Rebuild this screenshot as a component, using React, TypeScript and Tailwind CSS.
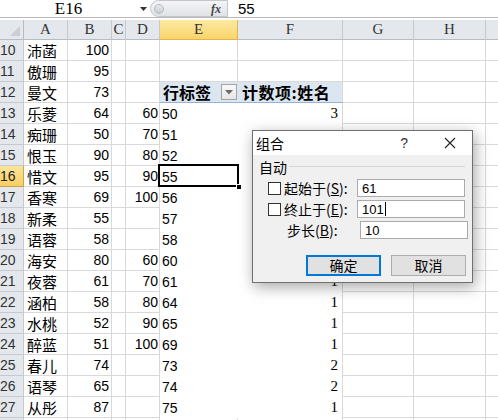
import React from "react";

const cols = ["A", "B", "C", "D", "E", "F", "G", "H", ""];
const widths = ["w-[24px]", "w-[44px]", "w-[44px]", "w-[14px]", "w-[34px]", "w-[78px]", "w-[105px]", "w-[71px]", "w-[72px]", "w-[30px]"];

type Row = { n: number; a: string; b: string; d: string; e: string; f: string };
const data: Row[] = [
  { n: 10, a: "沛菡", b: "100", d: "", e: "", f: "" },
  { n: 11, a: "傲珊", b: "95", d: "", e: "", f: "" },
  { n: 12, a: "曼文", b: "73", d: "", e: "H", f: "H" },
  { n: 13, a: "乐菱", b: "64", d: "60", e: "50", f: "3" },
  { n: 14, a: "痴珊", b: "50", d: "70", e: "51", f: "" },
  { n: 15, a: "恨玉", b: "90", d: "80", e: "52", f: "" },
  { n: 16, a: "惜文", b: "95", d: "90", e: "55", f: "" },
  { n: 17, a: "香寒", b: "69", d: "100", e: "56", f: "" },
  { n: 18, a: "新柔", b: "55", d: "", e: "57", f: "" },
  { n: 19, a: "语蓉", b: "58", d: "", e: "58", f: "" },
  { n: 20, a: "海安", b: "80", d: "60", e: "60", f: "" },
  { n: 21, a: "夜蓉", b: "61", d: "70", e: "61", f: "1" },
  { n: 22, a: "涵柏", b: "58", d: "80", e: "64", f: "1" },
  { n: 23, a: "水桃", b: "52", d: "90", e: "65", f: "1" },
  { n: 24, a: "醉蓝", b: "51", d: "100", e: "69", f: "1" },
  { n: 25, a: "春儿", b: "74", d: "", e: "73", f: "2" },
  { n: 26, a: "语琴", b: "65", d: "", e: "74", f: "2" },
  { n: 27, a: "从彤", b: "87", d: "", e: "75", f: "1" },
  { n: 28, a: "", b: "", d: "", e: "", f: "" },
];

const cjk = "font-['Noto_Sans_CJK_SC',sans-serif]";
const num = "font-['Liberation_Sans',sans-serif]";
const serif = "font-['Liberation_Serif',serif]";

function DataRow({ r }: { r: Row }) {
  const pivot = r.n >= 12 && r.n <= 27;
  const sel = r.n === 16;
  const base = "h-[21px] shrink-0 border-b border-r border-[#d9d9d9] flex items-center leading-none overflow-hidden";
  return (
    <div className="flex h-[21px]">
      <div
        className={`${widths[0]} h-[21px] shrink-0 border-b border-r flex items-center ${num} text-[14px] leading-none ${
          sel
            ? "bg-gradient-to-b from-[#fbe49a] to-[#f7cf5f] border-[#c9a550] text-[#222]"
            : "bg-[#e4e8ed] border-[#c5cad1] text-[#333]"
        }`}
      >
        {r.n < 28 && <span>{r.n}</span>}
      </div>
      <div className={`${widths[1]} ${base} ${cjk} text-[15px] pl-[3px] text-black`}>{r.a}</div>
      <div className={`${widths[2]} ${base} ${num} text-[14px] justify-end pr-[2px] text-black`}>{r.b}</div>
      <div className={`${widths[3]} ${base}`}></div>
      <div className={`${widths[4]} ${base} ${num} text-[14px] justify-end pr-[1px] text-black`}>{r.d}</div>
      {r.n === 12 ? (
        <>
          <div className={`${widths[5]} h-[21px] shrink-0 bg-[#dce6f1] border-b border-[#95b3d7] flex items-center pl-[3px] leading-none`}>
            <span className={`${cjk} font-bold text-[16px] text-black`}>行标签</span>
            <div className="ml-auto mr-[1px] w-[16px] h-[16px] border border-[#a3a3a3] bg-gradient-to-b from-[#f8f8f8] to-[#e6e6e6] flex items-center justify-center">
              <svg width="8" height="5" viewBox="0 0 8 5">
                <path d="M0 0 L8 0 L4 4.5 Z" fill="#6b6b6b" />
              </svg>
            </div>
          </div>
          <div className={`${widths[6]} h-[21px] shrink-0 bg-[#dce6f1] border-b border-r border-b-[#95b3d7] border-r-[#d9d9d9] flex items-center pl-[4px] leading-none`}>
            <span className={`${cjk} font-bold text-[16px] text-black tracking-[0.5px]`}>计数项:姓名</span>
          </div>
        </>
      ) : pivot ? (
        <>
          <div className={`${widths[5]} h-[21px] shrink-0 relative flex items-center pl-[2px] leading-none ${num} text-[14px] text-black`}>
            {r.e}
            {sel && (
              <div className="absolute left-[-2px] top-[-2px] right-[-1px] bottom-[0px] border-[2.5px] border-black">
                <div className="absolute right-[-5px] bottom-[-5px] w-[6px] h-[6px] bg-black border border-white"></div>
              </div>
            )}
          </div>
          <div className={`${widths[6]} h-[21px] shrink-0 border-r border-[#d9d9d9] flex items-center justify-end pr-[4px] leading-none ${serif} text-[15px] text-black`}>
            {r.f}
          </div>
        </>
      ) : (
        <>
          <div className={`${widths[5]} ${base}`}></div>
          <div className={`${widths[6]} ${base}`}></div>
        </>
      )}
      <div className={`${widths[7]} ${base}`}></div>
      <div className={`${widths[8]} ${base}`}></div>
      <div className={`${widths[9]} ${base}`}></div>
    </div>
  );
}

function Check() {
  return <div className="w-[13px] h-[13px] border border-[#333] bg-white shrink-0"></div>;
}

function Field({ value, cursor }: { value: string; cursor?: boolean }) {
  return (
    <div className={`w-[108px] h-[18px] border border-[#aaaaaa] bg-white flex items-center pl-[4px] leading-none ${num} text-[13px] text-black`}>
      {value}
      {cursor && <span className="inline-block w-[1px] h-[14px] bg-black ml-[1px]"></span>}
    </div>
  );
}

const dlg = "font-['Noto_Sans_CJK_SC',sans-serif]";

export default function App() {
  return (
    <div className="relative w-[498px] h-[420px] overflow-hidden bg-white select-none">
      {/* formula bar */}
      <div className="h-[18px] flex items-center border-b border-[#b9b9b9] bg-white">
        <div className={`w-[137px] h-full flex items-center justify-center leading-none ${serif} text-[17px] text-black`}>E16</div>
        <div className="w-[13px] flex items-center justify-center">
          <svg width="7" height="4" viewBox="0 0 7 4">
            <path d="M0 0 L7 0 L3.5 4 Z" fill="#333" />
          </svg>
        </div>
        <div className="w-[78px] h-[17px] rounded-l-[9px] border border-[#c3c6ca] bg-gradient-to-b from-[#f4f5f7] to-[#dfe2e6] flex items-center pl-[3px] pr-[6px]">
          <div className="w-[10px] h-[10px] rounded-full bg-gradient-to-b from-[#e9eaec] to-[#c9cdd2] border border-[#b5b9be]"></div>
          <span className={`ml-auto ${serif} italic font-bold text-[12px] leading-none text-[#444]`}>fx</span>
        </div>
        <div className={`pl-[10px] leading-none ${num} text-[15px] text-black`}>55</div>
      </div>
      <div className="h-[2px] bg-white"></div>
      {/* column headers */}
      <div className="flex h-[20px]">
        <div className="w-[24px] h-[20px] shrink-0 bg-[#e4e8ed] border-b border-r border-[#b5bcc5] relative">
          <svg className="absolute right-[3px] bottom-[3px]" width="10" height="10" viewBox="0 0 10 10">
            <path d="M10 0 L10 10 L0 10 Z" fill="#c9ced5" />
          </svg>
        </div>
        {cols.map((c, i) => (
          <div
            key={i}
            className={`${widths[i + 1]} h-[20px] shrink-0 border-b border-r flex items-center justify-center leading-none ${serif} text-[15px] ${
              c === "E"
                ? "bg-gradient-to-b from-[#fde9a4] to-[#f9d466] border-[#e1b452] text-[#333]"
                : "bg-[#e4e8ed] border-[#c5cad1] border-b-[#b5bcc5] text-[#333]"
            }`}
          >
            {c}
          </div>
        ))}
      </div>
      {data.map((r) => (
        <DataRow key={r.n} r={r} />
      ))}

      {/* dialog */}
      <div className="absolute left-[252px] top-[130px] w-[221px] h-[153px] border border-[#6f6f6f] bg-[#f0f0f0] shadow-[2px_4px_14px_rgba(0,0,0,0.35)] flex flex-col">
        <div className={`h-[24px] shrink-0 bg-white flex items-center pl-[3px] ${dlg} text-[14px] text-black`}>
          <span>组合</span>
          <span className={`ml-auto mr-[36px] ${num} text-[14px] text-[#333]`}>?</span>
          <svg className="mr-[16px]" width="12" height="12" viewBox="0 0 12 12">
            <path d="M1 1 L11 11 M11 1 L1 11" stroke="#222" strokeWidth="1.1" />
          </svg>
        </div>
        <div className={`flex-1 ${dlg} text-[14px] text-black`}>
          <div className="flex items-center pl-[6px] pr-[7px] h-[24px]">
            <span>自动</span>
            <div className="flex-1 h-[1px] bg-[#d6d6d6] ml-[2px] mt-[-2px]"></div>
          </div>
          <div className="flex flex-col gap-[3px] pl-[15px]">
            <div className="flex items-center h-[18px]">
              <Check />
              <span className="ml-[3px] w-[73px]">
                起始于(<span className="underline">S</span>):
              </span>
              <Field value="61" />
            </div>
            <div className="flex items-center h-[18px]">
              <Check />
              <span className="ml-[3px] w-[73px]">
                终止于(<span className="underline">E</span>):
              </span>
              <Field value="101" cursor />
            </div>
            <div className="flex items-center h-[18px]">
              <span className="ml-[19px] w-[73px]">
                步长(<span className="underline">B</span>):
              </span>
              <Field value="10" />
            </div>
          </div>
          <div className="flex gap-[10px] pl-[53px] mt-[16px]">
            <div className="w-[75px] h-[21px] border-2 border-[#0078d7] bg-[#e1e1e1] flex items-center justify-center">确定</div>
            <div className="w-[75px] h-[21px] border border-[#adadad] bg-[#e1e1e1] flex items-center justify-center">取消</div>
          </div>
        </div>
      </div>
    </div>
  );
}
